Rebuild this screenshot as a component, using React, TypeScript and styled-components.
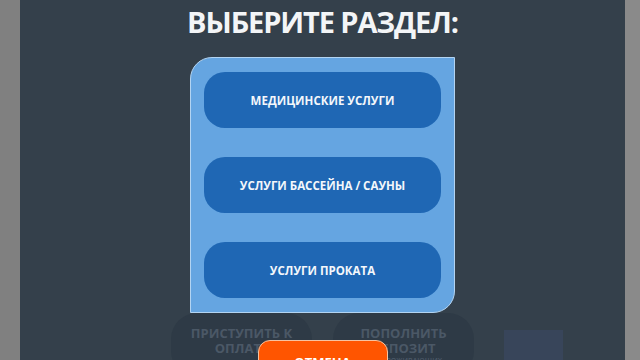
import styled, { createGlobalStyle } from "styled-components";

const GlobalStyle = createGlobalStyle`
  html, body {
    margin: 0;
    padding: 0;
    background: #34404b;
  }
  * {
    box-sizing: border-box;
  }
`;

const sections = ["МЕДИЦИНСКИЕ УСЛУГИ", "УСЛУГИ БАССЕЙНА / САУНЫ", "УСЛУГИ ПРОКАТА"];

export default function App() {
  return (
    <>
      <GlobalStyle />
      <Frame>
        <SideBar $width={20} $color="#808080" />
        <Screen>
          {/* dimmed kiosk screen behind the dialog */}
          <BackScreen>
            <BottomRow>
              <DimButton>
                ПРИСТУПИТЬ К<br />ОПЛАТЕ
              </DimButton>
              <DimButton>
                ПОПОЛНИТЬ<br />ДЕПОЗИТ
                <DimSmall>ДЛЯ ПРОЖИВАЮЩИХ</DimSmall>
              </DimButton>
              <DimSquare />
            </BottomRow>
          </BackScreen>

          <Overlay>
            <Title>ВЫБЕРИТЕ РАЗДЕЛ:</Title>
            <Panel>
              {sections.map((s) => (
                <SectionButton key={s}>{s}</SectionButton>
              ))}
            </Panel>
            <CancelButton>ОТМЕНА</CancelButton>
          </Overlay>
        </Screen>
        <SideBar $width={15} $color="#8a8a8a" />
      </Frame>
    </>
  );
}

/* ===== styled-components ===== */

const Frame = styled.div`
  width: 640px;
  height: 360px;
  display: flex;
  overflow: hidden;
  font-family: "Open Sans", "Noto Sans", sans-serif;
`;

const SideBar = styled.div<{ $width: number; $color: string }>`
  width: ${(p) => p.$width}px;
  flex-shrink: 0;
  background-color: ${(p) => p.$color};
`;

const Screen = styled.div`
  flex: 1;
  position: relative;
  overflow: hidden;
  background-color: #34404b;
`;

const BackScreen = styled.div`
  height: 100%;
  display: flex;
  flex-direction: column;
  justify-content: flex-end;
`;

const BottomRow = styled.div`
  display: flex;
  align-items: flex-start;
  gap: 21px;
  padding-left: 151px;
  height: 47px;
`;

const DimButton = styled.div`
  width: 141px;
  height: 64px;
  flex-shrink: 0;
  border-radius: 26px;
  background-color: #2e3a46;
  color: #4b5866;
  font-size: 13px;
  font-weight: 700;
  line-height: 15px;
  text-align: center;
  padding-top: 13px;
`;

const DimSmall = styled.div`
  font-size: 7px;
  line-height: 9px;
  font-weight: 600;
`;

const DimSquare = styled.div`
  width: 59px;
  height: 40px;
  margin-top: 17px;
  margin-left: 9px;
  background-color: #38455a;
`;

const Overlay = styled.div`
  position: absolute;
  inset: 0;
  display: flex;
  flex-direction: column;
  align-items: center;

  & > * {
    flex-shrink: 0;
  }
`;

const Title = styled.h1`
  margin: 0;
  height: 57px;
  padding-top: 4px;
  font-size: 29px;
  line-height: 36px;
  font-weight: 700;
  letter-spacing: -1.1px;
  color: #f3f5f7;
`;

const Panel = styled.div`
  width: 265px;
  padding: 14px 13px;
  display: flex;
  flex-direction: column;
  gap: 29px;
  background-color: #65a5e1;
  border: 1px solid #b3d4f2;
  border-radius: 22px 0 22px 0;
`;

const SectionButton = styled.div`
  height: 56px;
  border-radius: 21px;
  background-color: #1f67b4;
  color: #f4f7fb;
  font-size: 11.5px;
  font-weight: 700;
  display: flex;
  align-items: center;
  justify-content: center;
`;

const CancelButton = styled.div`
  margin-top: 27px;
  width: 130px;
  height: 44px;
  border-radius: 12px;
  border: 1px solid #f6c3a0;
  background-color: #ff5500;
  color: #ffffff;
  font-size: 13px;
  line-height: 16px;
  font-weight: 700;
  text-align: center;
  padding-top: 13px;
`;
